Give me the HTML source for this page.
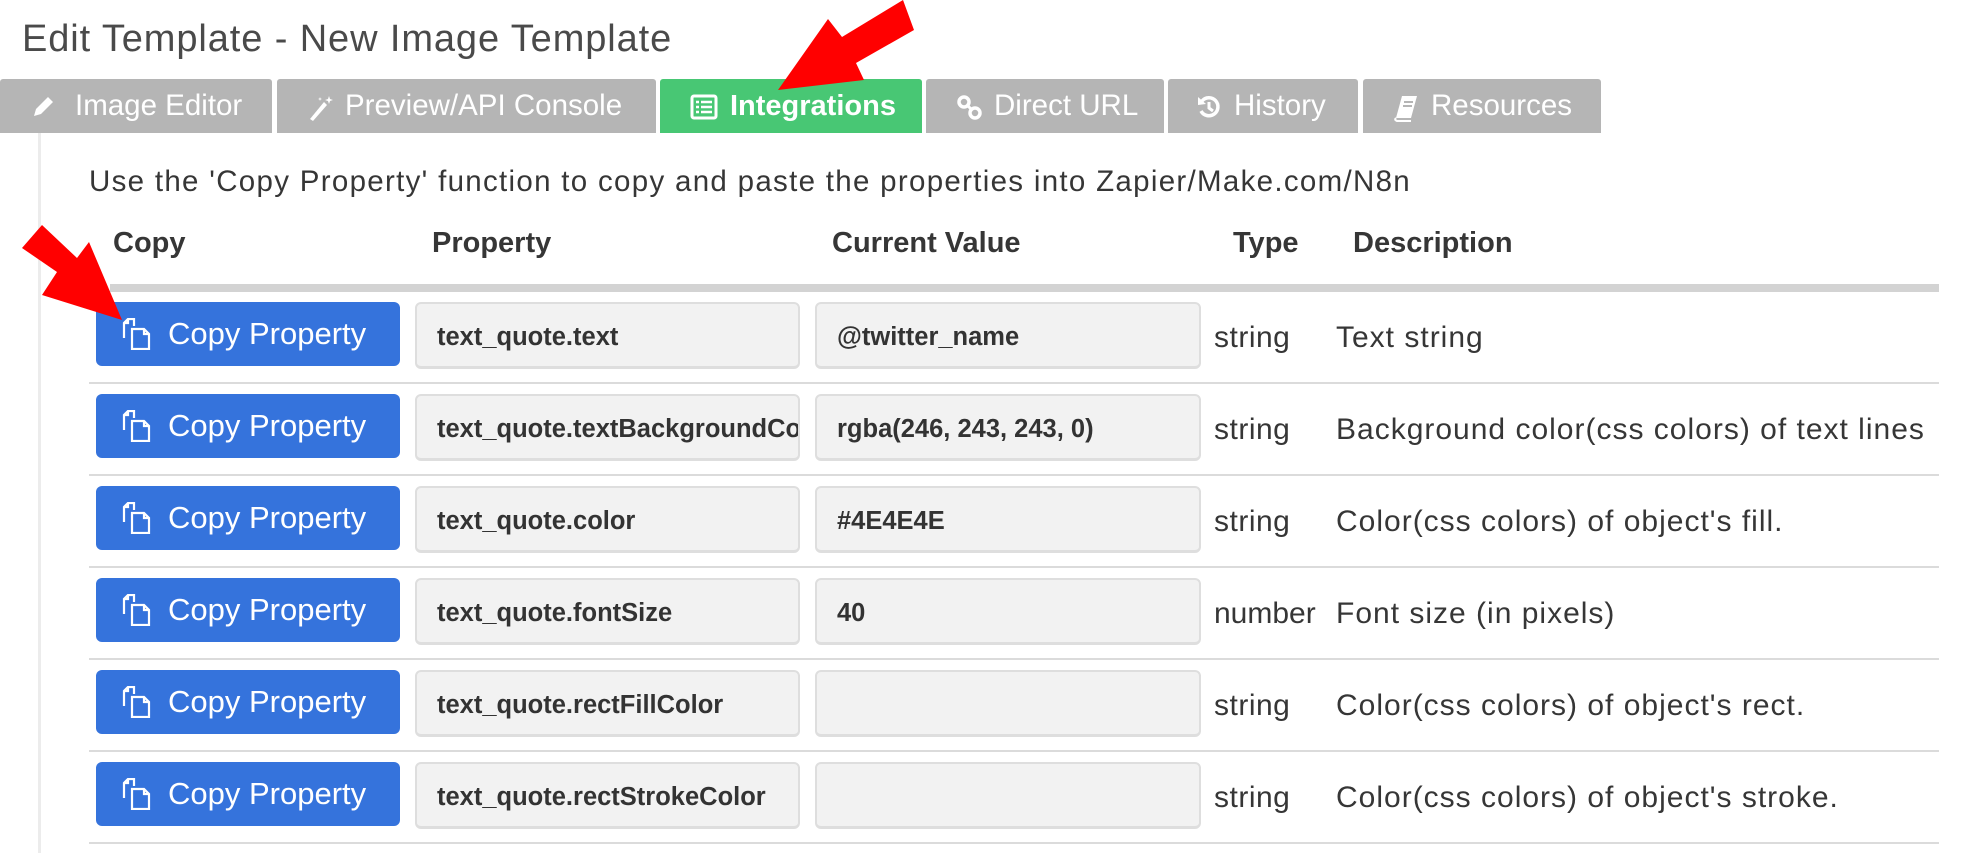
<!DOCTYPE html>
<html><head><meta charset="utf-8"><style>
*{margin:0;padding:0;box-sizing:border-box}
body{width:1982px;height:853px;background:#fff;position:relative;overflow:hidden;font-family:"Liberation Sans",Arial,sans-serif;color:#363636}
.a{position:absolute;white-space:nowrap}
.tab{position:absolute;top:79px;height:54px;background:#b5b5b5;color:#fff;font-size:29.5px;line-height:54px;border-radius:3px 3px 0 0}
.tab svg{position:absolute;top:15px}
.tab span{position:absolute;top:0}
.btn{position:absolute;left:96px;width:304px;height:64px;background:#3573dc;border-radius:6px;color:#fff;font-size:31px;line-height:64px}
.btn span{position:absolute;left:72px}
.btn svg{position:absolute;left:24px;top:16px}
.in{position:absolute;height:67px;background:#f2f2f2;border:2px solid #dedede;border-bottom-width:3px;border-radius:6px;font-weight:bold;font-size:25.5px;line-height:66px;padding-left:20px;overflow:hidden;white-space:nowrap;color:#333}
.sep{position:absolute;left:89px;width:1850px;height:2px;background:#dbdbdb}
.ty{position:absolute;left:1214px;font-size:30px;letter-spacing:0.5px;color:#363636}
.ds{position:absolute;left:1336px;font-size:30px;letter-spacing:1px;color:#363636}
.h{position:absolute;top:227px;font-weight:bold;font-size:29px;color:#363636}
</style></head><body>
<div class="a" style="left:22px;top:18px;font-size:38px;letter-spacing:0.9px;color:#4a4a4a">Edit Template - New Image Template</div>

<div class="tab" style="left:0;width:272px"><svg width="26" height="26" viewBox="0 0 26 26" style="left:30px"><path d="M4 22 L6 15 L18 3 L23 8 L11 20 Z M4 22 L10 20" fill="#fff"/></svg><span style="left:75px">Image Editor</span></div>
<div class="tab" style="left:277px;width:379px"><svg width="28" height="28" viewBox="0 0 28 28" style="left:30px"><path d="M3 25 L17 8 L20 11 L6 27 Z" fill="#fff"/><path d="M22 2l1 3 3 1-3 1-1 3-1-3-3-1 3-1z M13 3l.5 1.5 1.5.5-1.5.5-.5 1.5-.5-1.5-1.5-.5 1.5-.5z" fill="#fff"/></svg><span style="left:68px">Preview/API Console</span></div>
<div class="tab" style="left:660px;width:262px;background:#48c774;font-weight:bold;font-size:29px"><svg width="28" height="26" viewBox="0 0 28 26" style="left:30px"><rect x="2" y="2" width="24" height="22" rx="2" fill="none" stroke="#fff" stroke-width="3"/><path d="M6 8h3M11 8h11M6 13h3M11 13h11M6 18h3M11 18h11" stroke="#fff" stroke-width="2.5"/></svg><span style="left:70px">Integrations</span></div>
<div class="tab" style="left:926px;width:238px"><svg width="28" height="28" viewBox="0 0 28 28" style="left:30px"><g fill="none" stroke="#fff" stroke-width="3.5"><circle cx="8" cy="8" r="5"/><circle cx="19" cy="19" r="5"/></g><path d="M11 11 L16 16" stroke="#fff" stroke-width="3"/></svg><span style="left:68px">Direct URL</span></div>
<div class="tab" style="left:1168px;width:190px"><svg width="26" height="26" viewBox="0 0 26 26" style="left:28px"><path d="M6 7 A9 9 0 1 1 5 17" fill="none" stroke="#fff" stroke-width="3.5"/><path d="M2 3 L10 10 L2 11 Z" fill="#fff"/><path d="M13 8v6l4 3" fill="none" stroke="#fff" stroke-width="3"/></svg><span style="left:66px">History</span></div>
<div class="tab" style="left:1363px;width:238px"><svg width="26" height="28" viewBox="0 0 26 28" style="left:30px"><path d="M9 2 H24 L18 24 H3 Z" fill="#fff"/><path d="M3 24 q-2 2 1 3 H18" fill="none" stroke="#fff" stroke-width="2"/><path d="M11 8h9M10 12h9" stroke="#b5b5b5" stroke-width="2"/></svg><span style="left:68px">Resources</span></div>

<div class="a" style="left:38px;top:133px;width:3px;height:720px;background:#ececec"></div>

<div class="a" style="left:89px;top:165px;font-size:29.5px;letter-spacing:1.3px;color:#363636">Use the 'Copy Property' function to copy and paste the properties into Zapier/Make.com/N8n</div>

<div class="h" style="left:113px">Copy</div>
<div class="h" style="left:432px">Property</div>
<div class="h" style="left:832px">Current Value</div>
<div class="h" style="left:1233px">Type</div>
<div class="h" style="left:1353px">Description</div>
<div class="a" style="left:110px;top:284px;width:1829px;height:8px;background:#d3d3d3"></div>

<div class="btn" style="top:302px"><svg width="32" height="32" viewBox="0 0 32 32"><g fill="none" stroke="#fff" stroke-width="2.2"><path d="M4 20 V5 L8 1 H14 V8"/><path d="M8 1 V5 H4"/><path d="M12 11 H24 L29 16 V31 H12 Z"/><path d="M24 11 V16 H29"/></g></svg><span>Copy Property</span></div>
<div class="in" style="left:415px;top:302px;width:385px">text_quote.text</div>
<div class="in" style="left:815px;top:302px;width:386px">@twitter_name</div>
<div class="ty" style="top:321px">string</div><div class="ds" style="top:321px">Text string</div>
<div class="sep" style="top:382px"></div>

<div class="btn" style="top:394px"><svg width="32" height="32" viewBox="0 0 32 32"><g fill="none" stroke="#fff" stroke-width="2.2"><path d="M4 20 V5 L8 1 H14 V8"/><path d="M8 1 V5 H4"/><path d="M12 11 H24 L29 16 V31 H12 Z"/><path d="M24 11 V16 H29"/></g></svg><span>Copy Property</span></div>
<div class="in" style="left:415px;top:394px;width:385px">text_quote.textBackgroundColor</div>
<div class="in" style="left:815px;top:394px;width:386px">rgba(246, 243, 243, 0)</div>
<div class="ty" style="top:413px">string</div><div class="ds" style="top:413px">Background color(css colors) of text lines</div>
<div class="sep" style="top:474px"></div>

<div class="btn" style="top:486px"><svg width="32" height="32" viewBox="0 0 32 32"><g fill="none" stroke="#fff" stroke-width="2.2"><path d="M4 20 V5 L8 1 H14 V8"/><path d="M8 1 V5 H4"/><path d="M12 11 H24 L29 16 V31 H12 Z"/><path d="M24 11 V16 H29"/></g></svg><span>Copy Property</span></div>
<div class="in" style="left:415px;top:486px;width:385px">text_quote.color</div>
<div class="in" style="left:815px;top:486px;width:386px">#4E4E4E</div>
<div class="ty" style="top:505px">string</div><div class="ds" style="top:505px">Color(css colors) of object's fill.</div>
<div class="sep" style="top:566px"></div>

<div class="btn" style="top:578px"><svg width="32" height="32" viewBox="0 0 32 32"><g fill="none" stroke="#fff" stroke-width="2.2"><path d="M4 20 V5 L8 1 H14 V8"/><path d="M8 1 V5 H4"/><path d="M12 11 H24 L29 16 V31 H12 Z"/><path d="M24 11 V16 H29"/></g></svg><span>Copy Property</span></div>
<div class="in" style="left:415px;top:578px;width:385px">text_quote.fontSize</div>
<div class="in" style="left:815px;top:578px;width:386px">40</div>
<div class="ty" style="top:597px;letter-spacing:0">number</div><div class="ds" style="top:597px">Font size (in pixels)</div>
<div class="sep" style="top:658px"></div>

<div class="btn" style="top:670px"><svg width="32" height="32" viewBox="0 0 32 32"><g fill="none" stroke="#fff" stroke-width="2.2"><path d="M4 20 V5 L8 1 H14 V8"/><path d="M8 1 V5 H4"/><path d="M12 11 H24 L29 16 V31 H12 Z"/><path d="M24 11 V16 H29"/></g></svg><span>Copy Property</span></div>
<div class="in" style="left:415px;top:670px;width:385px">text_quote.rectFillColor</div>
<div class="in" style="left:815px;top:670px;width:386px"></div>
<div class="ty" style="top:689px">string</div><div class="ds" style="top:689px">Color(css colors) of object's rect.</div>
<div class="sep" style="top:750px"></div>

<div class="btn" style="top:762px"><svg width="32" height="32" viewBox="0 0 32 32"><g fill="none" stroke="#fff" stroke-width="2.2"><path d="M4 20 V5 L8 1 H14 V8"/><path d="M8 1 V5 H4"/><path d="M12 11 H24 L29 16 V31 H12 Z"/><path d="M24 11 V16 H29"/></g></svg><span>Copy Property</span></div>
<div class="in" style="left:415px;top:762px;width:385px">text_quote.rectStrokeColor</div>
<div class="in" style="left:815px;top:762px;width:386px"></div>
<div class="ty" style="top:781px">string</div><div class="ds" style="top:781px">Color(css colors) of object's stroke.</div>
<div class="sep" style="top:842px"></div>

<svg class="a" style="left:0;top:0" width="1982" height="853"><polygon points="778,90 828,19 842,37 903,0 914,30 856,63 864,80" fill="#ff0000"/><polygon points="122,320 89,242 77,258 42,225 22,248 57,272 42,295" fill="#ff0000"/></svg>
</body></html>
